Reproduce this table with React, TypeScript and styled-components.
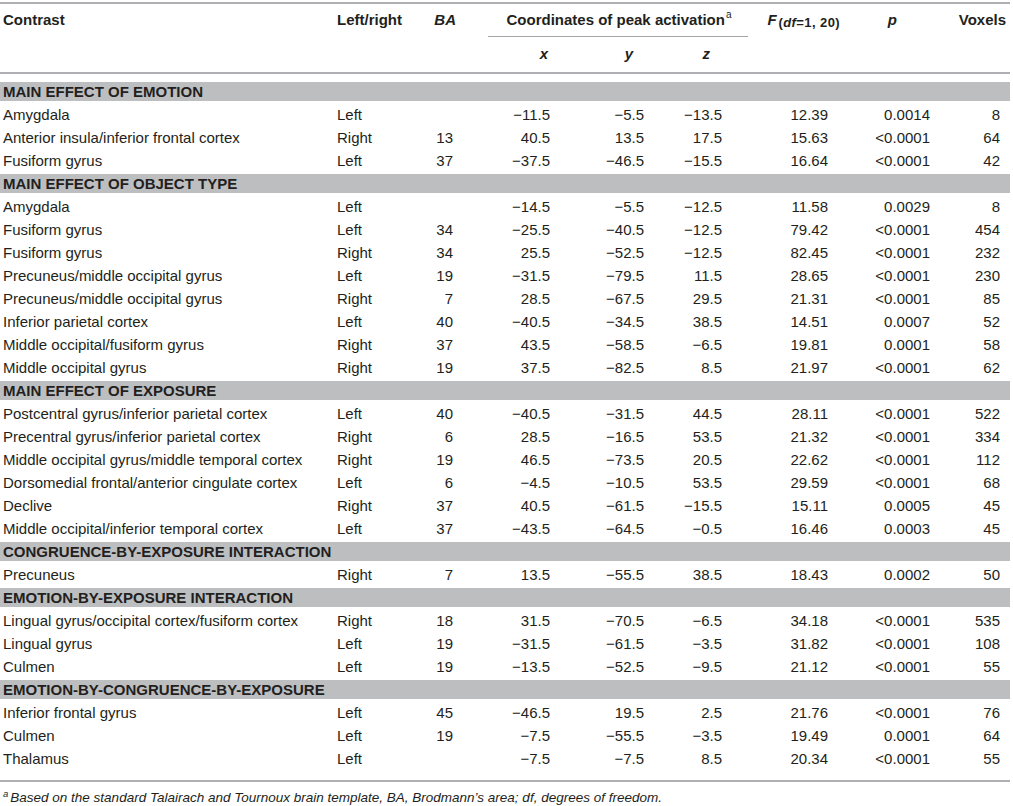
import React from "react";
import styled, { createGlobalStyle } from "styled-components";

const GlobalStyle = createGlobalStyle`
  html, body { margin: 0; padding: 0; background: #ffffff; }
  body {
    font-family: "Liberation Sans", Arial, sans-serif;
    color: #231f20;
    -webkit-font-smoothing: antialiased;
  }
`;

const COLS = "337px 83px 68px 102px 78px 80px 102px 100px 60px";

type Col = { align: "left" | "right"; pad: number; head: number };

const COLUMNS: Col[] = [
  { align: "left", pad: 3, head: 3 },
  { align: "left", pad: 0, head: 0 },
  { align: "right", pad: 35, head: 32 },
  { align: "right", pad: 40, head: 42 },
  { align: "right", pad: 24, head: 35 },
  { align: "right", pad: 26, head: 38 },
  { align: "right", pad: 22, head: 10 },
  { align: "right", pad: 20, head: 53 },
  { align: "right", pad: 10, head: 4 },
];

type Row = [string, string, string, string, string, string, string, string, string];
type Section = { title: string; rows: Row[] };

const SECTIONS: Section[] = [
  {
    title: "MAIN EFFECT OF EMOTION",
    rows: [
      ["Amygdala", "Left", "", "−11.5", "−5.5", "−13.5", "12.39", "0.0014", "8"],
      ["Anterior insula/inferior frontal cortex", "Right", "13", "40.5", "13.5", "17.5", "15.63", "<0.0001", "64"],
      ["Fusiform gyrus", "Left", "37", "−37.5", "−46.5", "−15.5", "16.64", "<0.0001", "42"],
    ],
  },
  {
    title: "MAIN EFFECT OF OBJECT TYPE",
    rows: [
      ["Amygdala", "Left", "", "−14.5", "−5.5", "−12.5", "11.58", "0.0029", "8"],
      ["Fusiform gyrus", "Left", "34", "−25.5", "−40.5", "−12.5", "79.42", "<0.0001", "454"],
      ["Fusiform gyrus", "Right", "34", "25.5", "−52.5", "−12.5", "82.45", "<0.0001", "232"],
      ["Precuneus/middle occipital gyrus", "Left", "19", "−31.5", "−79.5", "11.5", "28.65", "<0.0001", "230"],
      ["Precuneus/middle occipital gyrus", "Right", "7", "28.5", "−67.5", "29.5", "21.31", "<0.0001", "85"],
      ["Inferior parietal cortex", "Left", "40", "−40.5", "−34.5", "38.5", "14.51", "0.0007", "52"],
      ["Middle occipital/fusiform gyrus", "Right", "37", "43.5", "−58.5", "−6.5", "19.81", "0.0001", "58"],
      ["Middle occipital gyrus", "Right", "19", "37.5", "−82.5", "8.5", "21.97", "<0.0001", "62"],
    ],
  },
  {
    title: "MAIN EFFECT OF EXPOSURE",
    rows: [
      ["Postcentral gyrus/inferior parietal cortex", "Left", "40", "−40.5", "−31.5", "44.5", "28.11", "<0.0001", "522"],
      ["Precentral gyrus/inferior parietal cortex", "Right", "6", "28.5", "−16.5", "53.5", "21.32", "<0.0001", "334"],
      ["Middle occipital gyrus/middle temporal cortex", "Right", "19", "46.5", "−73.5", "20.5", "22.62", "<0.0001", "112"],
      ["Dorsomedial frontal/anterior cingulate cortex", "Left", "6", "−4.5", "−10.5", "53.5", "29.59", "<0.0001", "68"],
      ["Declive", "Right", "37", "40.5", "−61.5", "−15.5", "15.11", "0.0005", "45"],
      ["Middle occipital/inferior temporal cortex", "Left", "37", "−43.5", "−64.5", "−0.5", "16.46", "0.0003", "45"],
    ],
  },
  {
    title: "CONGRUENCE-BY-EXPOSURE INTERACTION",
    rows: [["Precuneus", "Right", "7", "13.5", "−55.5", "38.5", "18.43", "0.0002", "50"]],
  },
  {
    title: "EMOTION-BY-EXPOSURE INTERACTION",
    rows: [
      ["Lingual gyrus/occipital cortex/fusiform cortex", "Right", "18", "31.5", "−70.5", "−6.5", "34.18", "<0.0001", "535"],
      ["Lingual gyrus", "Left", "19", "−31.5", "−61.5", "−3.5", "31.82", "<0.0001", "108"],
      ["Culmen", "Left", "19", "−13.5", "−52.5", "−9.5", "21.12", "<0.0001", "55"],
    ],
  },
  {
    title: "EMOTION-BY-CONGRUENCE-BY-EXPOSURE",
    rows: [
      ["Inferior frontal gyrus", "Left", "45", "−46.5", "19.5", "2.5", "21.76", "<0.0001", "76"],
      ["Culmen", "Left", "19", "−7.5", "−55.5", "−3.5", "19.49", "0.0001", "64"],
      ["Thalamus", "Left", "", "−7.5", "−7.5", "8.5", "20.34", "<0.0001", "55"],
    ],
  },
];

const Page = styled.div`
  width: 1010px;
  padding-top: 2px;
`;

const Table = styled.div`
  border-top: 2px solid #aeb0b3;
  border-bottom: 2px solid #aeb0b3;
  padding-bottom: 10px;
`;

const Head = styled.div`
  display: grid;
  grid-template-columns: ${COLS};
  grid-template-rows: 33px 35px;
  border-bottom: 2px solid #aeb0b3;
  margin-bottom: 8px;
  font-weight: bold;
  font-size: 15px;
`;

const HeadCell = styled.div<{ $align: string; $pad: number; $col: number; $row: number; $italic?: boolean }>`
  grid-column: ${(p) => p.$col};
  grid-row: ${(p) => p.$row};
  display: flex;
  align-items: center;
  justify-content: ${(p) => (p.$align === "left" ? "flex-start" : "flex-end")};
  padding-left: ${(p) => (p.$align === "left" ? p.$pad : 0)}px;
  padding-right: ${(p) => (p.$align === "right" ? p.$pad : 0)}px;
  padding-bottom: 2px;
  font-style: ${(p) => (p.$italic ? "italic" : "normal")};
  white-space: nowrap;
`;

const SpanHead = styled.div`
  grid-column: 4 / 7;
  grid-row: 1;
  display: flex;
  align-items: center;
  justify-content: center;
  padding-bottom: 2px;
  padding-left: 2px;
  border-bottom: 1px solid #a4a6a9;
  white-space: nowrap;
`;

const Sup = styled.span`
  font-size: 10px;
  font-weight: normal;
  position: relative;
  top: -5px;
  margin-left: 1px;
`;

const Sub = styled.span`
  font-size: 13px;
  font-style: normal;
  letter-spacing: 0.4px;
  position: relative;
  top: 3px;
  margin-left: 2px;
`;

const SubItalic = styled.span`
  font-style: italic;
`;

const DataRow = styled.div`
  display: grid;
  grid-template-columns: ${COLS};
  height: 23px;
  align-items: center;
  font-size: 15px;
`;

const Cell = styled.div<{ $align: string; $pad: number }>`
  text-align: ${(p) => p.$align};
  padding-left: ${(p) => (p.$align === "left" ? p.$pad : 0)}px;
  padding-right: ${(p) => (p.$align === "right" ? p.$pad : 0)}px;
  white-space: nowrap;
`;

const Band = styled.div`
  height: 19px;
  margin: 2px 0 2px;
  background: #bcbec0;
  display: flex;
  align-items: center;
  padding-left: 3px;
  font-weight: bold;
  font-size: 15px;
  white-space: nowrap;
`;

const Footnote = styled.div`
  margin-top: 8px;
  padding-left: 3px;
  font-style: italic;
  font-size: 13.5px;
  white-space: nowrap;
`;

const FootSup = styled.span`
  font-size: 9.5px;
  position: relative;
  top: -5px;
  margin-right: 2px;
`;

const headLabels: { col: number; label: React.ReactNode; italic?: boolean }[] = [
  { col: 1, label: "Contrast" },
  { col: 2, label: "Left/right" },
  { col: 3, label: "BA", italic: true },
  { col: 8, label: "p", italic: true },
  { col: 9, label: "Voxels" },
];

export default function App() {
  return (
    <Page>
      <GlobalStyle />
      <Table>
        <Head>
          {headLabels.map((h) => (
            <HeadCell
              key={h.col}
              $col={h.col}
              $row={1}
              $align={COLUMNS[h.col - 1].align}
              $pad={COLUMNS[h.col - 1].head}
              $italic={h.italic}
            >
              {h.label}
            </HeadCell>
          ))}
          <SpanHead>
            Coordinates of peak activation<Sup>a</Sup>
          </SpanHead>
          <HeadCell $col={7} $row={1} $align="right" $pad={COLUMNS[6].head} $italic>
            F
            <Sub>
              (<SubItalic>df</SubItalic>=1, 20)
            </Sub>
          </HeadCell>
          {["x", "y", "z"].map((l, i) => (
            <HeadCell key={l} $col={4 + i} $row={2} $align="right" $pad={COLUMNS[3 + i].head} $italic>
              {l}
            </HeadCell>
          ))}
        </Head>
        {SECTIONS.map((s) => (
          <React.Fragment key={s.title}>
            <Band>{s.title}</Band>
            {s.rows.map((r, ri) => (
              <DataRow key={ri}>
                {r.map((v, ci) => (
                  <Cell key={ci} $align={COLUMNS[ci].align} $pad={COLUMNS[ci].pad}>
                    {v}
                  </Cell>
                ))}
              </DataRow>
            ))}
          </React.Fragment>
        ))}
      </Table>
      <Footnote>
        <FootSup>a</FootSup>Based on the standard Talairach and Tournoux brain template, BA, Brodmann’s area; df, degrees of freedom.
      </Footnote>
    </Page>
  );
}
